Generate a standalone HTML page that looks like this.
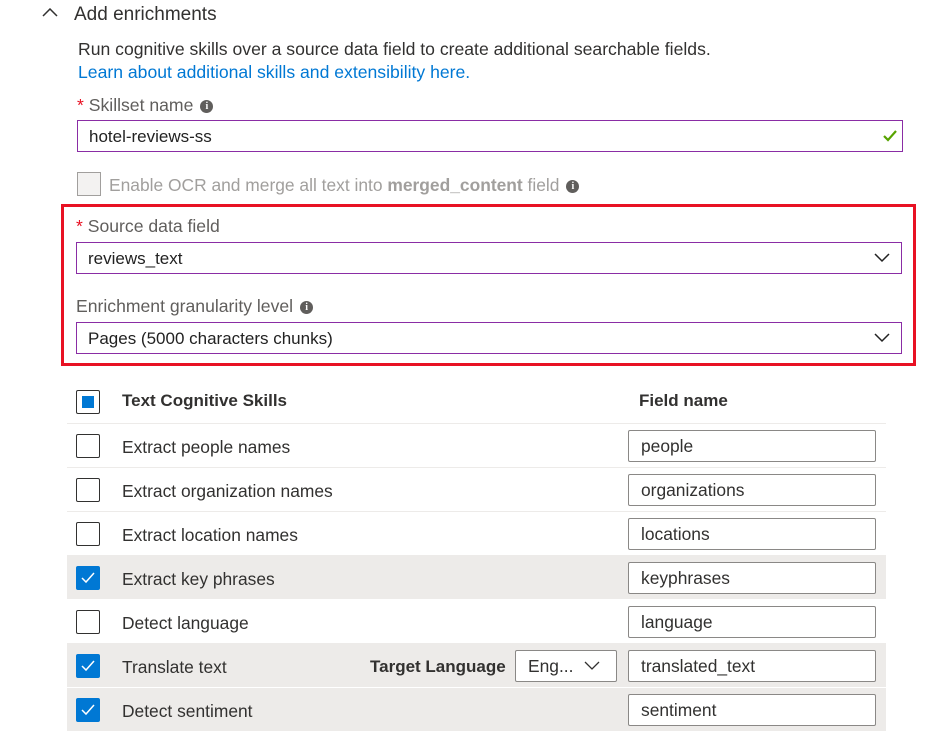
<!DOCTYPE html>
<html><head><meta charset="utf-8"><style>
*{box-sizing:border-box;margin:0;padding:0}
body{width:927px;height:747px;background:#fff;font-family:"Liberation Sans",sans-serif;color:#323130;position:relative;overflow:hidden;font-size:17.6px}
.a{position:absolute;white-space:nowrap}
.in{position:absolute;border:1px solid #8a2da5;height:32px;padding-left:11px;line-height:31px;font-size:17px;color:#222}
.lbl{color:#605e5c;font-size:17.6px}
.info{display:inline-block;width:13px;height:13px;border-radius:50%;background:#605e5c;color:#fff;font-size:10px;font-weight:bold;text-align:center;line-height:13px;vertical-align:middle;margin-left:7px;font-family:"Liberation Serif",serif}
.star{color:#e81123}
.row{position:absolute;left:67px;width:819px;height:44px;border-bottom:1px solid #edebe9}
.g{background:#edebe9;border-bottom:1px solid #fff}
.cb{position:absolute;left:9px;top:10px;width:24px;height:24px;border:1px solid #323130;border-radius:2px;background:#fff}
.cb.on{background:#0078d4;border-color:#0078d4}
.cb.on svg{position:absolute;left:3px;top:3px}
.rt{position:absolute;left:55px;top:13px;font-size:17.4px;color:#323130}
.fn{position:absolute;left:561px;top:6px;width:248px;height:32px;border:1px solid #8a8886;border-radius:2px;background:#fff;padding-left:12px;line-height:30px;font-size:17.4px}
</style></head><body>
<svg class="a" style="left:42px;top:8px" width="16" height="10"><path d="M1 8 L8 1 L15 8" stroke="#323130" stroke-width="1.5" fill="none"/></svg>
<div class="a" style="left:74px;top:4px;font-size:19px">Add enrichments</div>
<div class="a" style="left:78px;top:39px;font-size:17.6px">Run cognitive skills over a source data field to create additional searchable fields.</div>
<div class="a" style="left:78px;top:62px;font-size:17.6px;color:#0078d4">Learn about additional skills and extensibility here.</div>
<div class="a lbl" style="left:77px;top:95px"><span class="star">*</span> Skillset name<span class="info">i</span></div>
<div class="in" style="left:77px;top:120px;width:826px">hotel-reviews-ss</div>
<svg class="a" style="left:883px;top:130px" width="14" height="12"><path d="M1 6 L5 10 L13 1" stroke="#57a300" stroke-width="2.2" fill="none"/></svg>
<div class="a" style="left:77px;top:172px;width:24px;height:24px;border:1px solid #a19f9d;background:#f3f2f1"></div>
<div class="a" style="left:109px;top:175px;font-size:17.4px;color:#a19f9d">Enable OCR and merge all text into <b>merged_content</b> field<span class="info">i</span></div>
<div class="a" style="left:61px;top:204px;width:855px;height:162px;border:3px solid #e81123"></div>
<div class="a lbl" style="left:76px;top:216px"><span class="star">*</span> Source data field</div>
<div class="in" style="left:76px;top:242px;width:826px">reviews_text</div>
<svg class="a" style="left:874px;top:253px" width="16" height="10"><path d="M1 1 L8 8 L15 1" stroke="#222" stroke-width="1.5" fill="none"/></svg>
<div class="a lbl" style="left:76px;top:296px">Enrichment granularity level<span class="info">i</span></div>
<div class="in" style="left:76px;top:322px;width:826px">Pages (5000 characters chunks)</div>
<svg class="a" style="left:874px;top:333px" width="16" height="10"><path d="M1 1 L8 8 L15 1" stroke="#222" stroke-width="1.5" fill="none"/></svg>

<div class="row" style="top:380px">
<div class="cb" style="border-color:#323130"><div style="position:absolute;left:5px;top:5px;width:12px;height:12px;background:#0078d4"></div></div>
<div class="rt" style="font-weight:bold;top:11px;font-size:17px">Text Cognitive Skills</div>
<div class="rt" style="font-weight:bold;left:572px;top:11px;font-size:17px">Field name</div>
</div>
<div class="row" style="top:424px"><div class="cb"></div><div class="rt">Extract people names</div><div class="fn">people</div></div>
<div class="row" style="top:468px"><div class="cb"></div><div class="rt">Extract organization names</div><div class="fn">organizations</div></div>
<div class="row" style="top:512px"><div class="cb"></div><div class="rt">Extract location names</div><div class="fn">locations</div></div>
<div class="row g" style="top:556px"><div class="cb on"><svg width="16" height="16"><path d="M2 8 L6 12 L14 3" stroke="#fff" stroke-width="1.5" fill="none"/></svg></div><div class="rt">Extract key phrases</div><div class="fn">keyphrases</div></div>
<div class="row" style="top:600px"><div class="cb"></div><div class="rt">Detect language</div><div class="fn">language</div></div>
<div class="row g" style="top:644px"><div class="cb on"><svg width="16" height="16"><path d="M2 8 L6 12 L14 3" stroke="#fff" stroke-width="1.5" fill="none"/></svg></div><div class="rt">Translate text</div>
<div class="rt" style="left:303px;font-weight:bold;font-size:17px">Target Language</div>
<div class="fn" style="left:448px;width:102px">Eng...</div>
<svg class="a" style="left:517px;top:17px" width="16" height="10"><path d="M1 1 L8 8 L15 1" stroke="#323130" stroke-width="1.3" fill="none"/></svg>
<div class="fn">translated_text</div></div>
<div class="row g" style="top:688px"><div class="cb on"><svg width="16" height="16"><path d="M2 8 L6 12 L14 3" stroke="#fff" stroke-width="1.5" fill="none"/></svg></div><div class="rt">Detect sentiment</div><div class="fn">sentiment</div></div>
</body></html>
